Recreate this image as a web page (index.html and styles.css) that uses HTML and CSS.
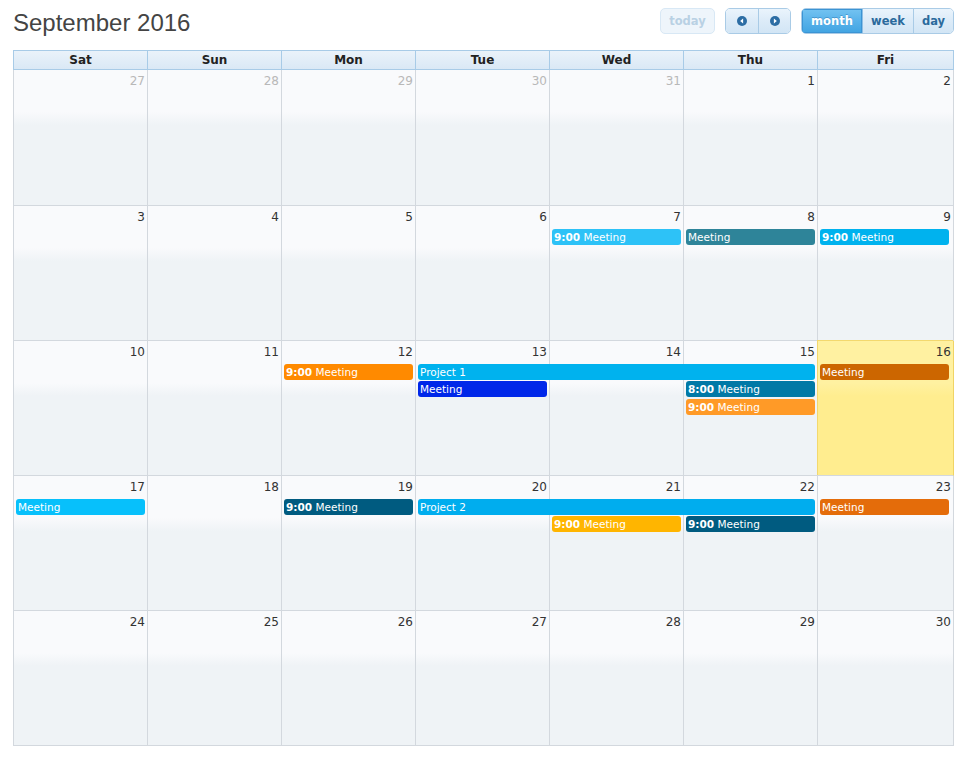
FILE: index.html
```html
<!DOCTYPE html>
<html lang="en">
<head>
<meta charset="utf-8">
<title>September 2016</title>
<link rel="stylesheet" href="styles.css">
</head>
<body>
<div class="page">
  <div class="toolbar">
    <h2 class="title">September 2016</h2>
    <div class="controls">
      <button class="btn btn-today">today</button>
      <div class="group">
        <button class="btn btn-nav" aria-label="prev">
          <svg viewBox="0 0 10 10" width="10" height="10"><circle cx="5" cy="5" r="5" fill="#2c6da4"/><polygon points="6.1,2.6 3.2,5 6.1,7.4" fill="#fff"/></svg>
        </button>
        <button class="btn btn-nav" aria-label="next">
          <svg viewBox="0 0 10 10" width="10" height="10"><circle cx="5" cy="5" r="5" fill="#2c6da4"/><polygon points="3.9,2.6 6.8,5 3.9,7.4" fill="#fff"/></svg>
        </button>
      </div>
      <div class="group">
        <button class="btn btn-view btn-month active">month</button>
        <button class="btn btn-view btn-week">week</button>
        <button class="btn btn-view btn-day">day</button>
      </div>
    </div>
  </div>

  <div class="cal">
    <div class="dow">
      <div class="dow-cell">Sat</div>
      <div class="dow-cell">Sun</div>
      <div class="dow-cell">Mon</div>
      <div class="dow-cell">Tue</div>
      <div class="dow-cell">Wed</div>
      <div class="dow-cell">Thu</div>
      <div class="dow-cell">Fri</div>
    </div>

    <!-- week 1 -->
    <div class="week week-first">
      <div class="cell c1"></div><div class="cell c2"></div><div class="cell c3"></div><div class="cell c4"></div><div class="cell c5"></div><div class="cell c6"></div><div class="cell c7"></div>
      <div class="num c1 other">27</div>
      <div class="num c2 other">28</div>
      <div class="num c3 other">29</div>
      <div class="num c4 other">30</div>
      <div class="num c5 other">31</div>
      <div class="num c6">1</div>
      <div class="num c7">2</div>
    </div>

    <!-- week 2 -->
    <div class="week">
      <div class="cell c1"></div><div class="cell c2"></div><div class="cell c3"></div><div class="cell c4"></div><div class="cell c5"></div><div class="cell c6"></div><div class="cell c7"></div>
      <div class="num c1">3</div>
      <div class="num c2">4</div>
      <div class="num c3">5</div>
      <div class="num c4">6</div>
      <div class="num c5">7</div>
      <div class="num c6">8</div>
      <div class="num c7">9</div>
      <div class="ev c5 r2 ev-sky"><b>9:00</b> Meeting</div>
      <div class="ev c6 r2 ev-teal">Meeting</div>
      <div class="ev c7 r2 ev-cyan"><b>9:00</b> Meeting</div>
    </div>

    <!-- week 3 -->
    <div class="week">
      <div class="cell c1"></div><div class="cell c2"></div><div class="cell c3"></div><div class="cell c4"></div><div class="cell c5"></div><div class="cell c6"></div><div class="cell c7 today"></div>
      <div class="num c1">10</div>
      <div class="num c2">11</div>
      <div class="num c3">12</div>
      <div class="num c4">13</div>
      <div class="num c5">14</div>
      <div class="num c6">15</div>
      <div class="num c7">16</div>
      <div class="ev c3 r2 ev-orange"><b>9:00</b> Meeting</div>
      <div class="ev c4-6 r2 ev-cyan">Project 1</div>
      <div class="ev c4 r3 ev-blue">Meeting</div>
      <div class="ev c6 r3 ev-ocean"><b>8:00</b> Meeting</div>
      <div class="ev c6 r4 ev-amber"><b>9:00</b> Meeting</div>
      <div class="ev c7 r2 ev-rust">Meeting</div>
    </div>

    <!-- week 4 -->
    <div class="week">
      <div class="cell c1"></div><div class="cell c2"></div><div class="cell c3"></div><div class="cell c4"></div><div class="cell c5"></div><div class="cell c6"></div><div class="cell c7"></div>
      <div class="num c1">17</div>
      <div class="num c2">18</div>
      <div class="num c3">19</div>
      <div class="num c4">20</div>
      <div class="num c5">21</div>
      <div class="num c6">22</div>
      <div class="num c7">23</div>
      <div class="ev c1 r2 ev-light">Meeting</div>
      <div class="ev c3 r2 ev-navy"><b>9:00</b> Meeting</div>
      <div class="ev c4-6 r2 ev-cyan2">Project 2</div>
      <div class="ev c5 r3 ev-yellow"><b>9:00</b> Meeting</div>
      <div class="ev c6 r3 ev-navy"><b>9:00</b> Meeting</div>
      <div class="ev c7 r2 ev-pumpkin">Meeting</div>
    </div>

    <!-- week 5 -->
    <div class="week">
      <div class="cell c1"></div><div class="cell c2"></div><div class="cell c3"></div><div class="cell c4"></div><div class="cell c5"></div><div class="cell c6"></div><div class="cell c7"></div>
      <div class="num c1">24</div>
      <div class="num c2">25</div>
      <div class="num c3">26</div>
      <div class="num c4">27</div>
      <div class="num c5">28</div>
      <div class="num c6">29</div>
      <div class="num c7">30</div>
    </div>
  </div>
</div>
</body>
</html>
```

FILE: styles.css
```css
* {
  box-sizing: border-box;
}

body {
  margin: 0;
  background: #ffffff;
  font-family: "DejaVu Sans", Verdana, sans-serif;
  color: #333333;
}

.page {
  padding: 0 13px;
}

/* ---------- toolbar ---------- */
.toolbar {
  height: 50px;
  display: flex;
  justify-content: space-between;
  align-items: flex-start;
}

.title {
  margin: 9px 0 0 0;
  font-family: "Liberation Sans", Arial, sans-serif;
  font-weight: normal;
  font-size: 24px;
  line-height: 28px;
  color: #444444;
}

.controls {
  display: flex;
  gap: 10px;
  padding-top: 8px;
}

.btn {
  height: 26px;
  margin: 0;
  padding: 0;
  border: 1px solid #a9cbe6;
  border-radius: 5px;
  background: linear-gradient(to bottom, #eaf4fc 0%, #dcebf8 50%, #d2e5f5 100%);
  font-family: "DejaVu Sans", Verdana, sans-serif;
  font-weight: bold;
  font-size: 11.5px;
  line-height: 24px;
  color: #2b6a9c;
  text-align: center;
  display: flex;
  align-items: center;
  justify-content: center;
}

.btn-today {
  width: 55px;
  background: #eef5fb;
  border-color: #d8e8f5;
  color: #b9d1e4;
}

.group {
  display: flex;
  height: 26px;
  border: 1px solid #a9cbe6;
  border-radius: 5px;
  overflow: hidden;
}

.group .btn {
  height: 24px;
  border: none;
  border-radius: 0;
}

.group .btn + .btn {
  border-left: 1px solid #a9cbe6;
}

.btn-nav {
  width: 32px;
}

.btn-nav svg {
  display: block;
}

.btn-month {
  width: 60px;
}

.btn-week {
  width: 51px;
}

.btn-day {
  width: 40px;
}

.btn.active {
  background: linear-gradient(to bottom, #74c3f1 0%, #58b2ea 50%, #41a4e2 100%);
  color: #ffffff;
  text-shadow: 0 -1px 0 rgba(20, 90, 150, 0.35);
  box-shadow: inset 0 0 0 1px #3b94d4;
}

.group .btn.active + .btn {
  border-left-color: #8fbfe4;
}

/* ---------- calendar ---------- */
.cal {
  width: 941px;
}

.dow {
  display: grid;
  grid-template-columns: repeat(6, 134px) 136px;
  border-top: 1px solid #a8cbe7;
  border-left: 1px solid #a8cbe7;
  background: linear-gradient(to bottom, #eaf2fa 0%, #d9e8f5 100%);
}

.dow-cell {
  height: 19px;
  border-right: 1px solid #a8cbe7;
  border-bottom: 1px solid #a8cbe7;
  text-align: center;
  font-weight: bold;
  font-size: 12px;
  line-height: 18px;
  color: #222222;
}

.week {
  display: grid;
  grid-template-columns: repeat(6, 134px) 136px;
  grid-template-rows: 23px 17px 18px 17px 1fr;
  height: 135px;
  border-left: 1px solid #d3d8de;
}

.week-first {
  height: 136px;
}

.cell {
  grid-row: 1 / -1;
  border-right: 1px solid #d3d8de;
  border-bottom: 1px solid #d3d8de;
  background: linear-gradient(to bottom, #f9fafc 0, #f9fafc 42px, #eff3f6 55px, #eff3f6 100%);
}

.cell.today {
  background: linear-gradient(to bottom, #fff1a1 0, #fff1a1 42px, #ffed8f 55px, #ffed8f 100%);
  border-right-color: #f0d465;
  box-shadow: -1px -1px 0 #f3d86e;
}

.c1 { grid-column: 1; }
.c2 { grid-column: 2; }
.c3 { grid-column: 3; }
.c4 { grid-column: 4; }
.c5 { grid-column: 5; }
.c6 { grid-column: 6; }
.c7 { grid-column: 7; }
.c4-6 { grid-column: 4 / 7; }

.r2 { grid-row: 2; }
.r3 { grid-row: 3; }
.r4 { grid-row: 4; }

.num {
  grid-row: 1;
  padding: 4px 3px 0 0;
  text-align: right;
  font-size: 12px;
  line-height: 15px;
  color: #333333;
}

.num.other {
  color: #b8b8b8;
}

.ev {
  height: 16px;
  margin: 0 3px 0 2px;
  padding: 0 2px;
  border-radius: 3px;
  font-size: 10.5px;
  line-height: 16px;
  color: #ffffff;
  white-space: nowrap;
  overflow: hidden;
}

.ev.c7 {
  margin-right: 5px;
}

.ev b {
  font-weight: bold;
}

.ev-sky { background: #2dc2f7; }
.ev-teal { background: #2e8499; }
.ev-cyan { background: #00b2ee; }
.ev-cyan2 { background: #00adee; }
.ev-orange { background: #ff8a00; }
.ev-blue { background: #0027e9; }
.ev-ocean { background: #0079a6; }
.ev-amber { background: #ff9a27; }
.ev-rust { background: #cc6600; }
.ev-light { background: #07c0fb; }
.ev-navy { background: #005b80; }
.ev-yellow { background: #ffb500; }
.ev-pumpkin { background: #e46c0a; }
```
